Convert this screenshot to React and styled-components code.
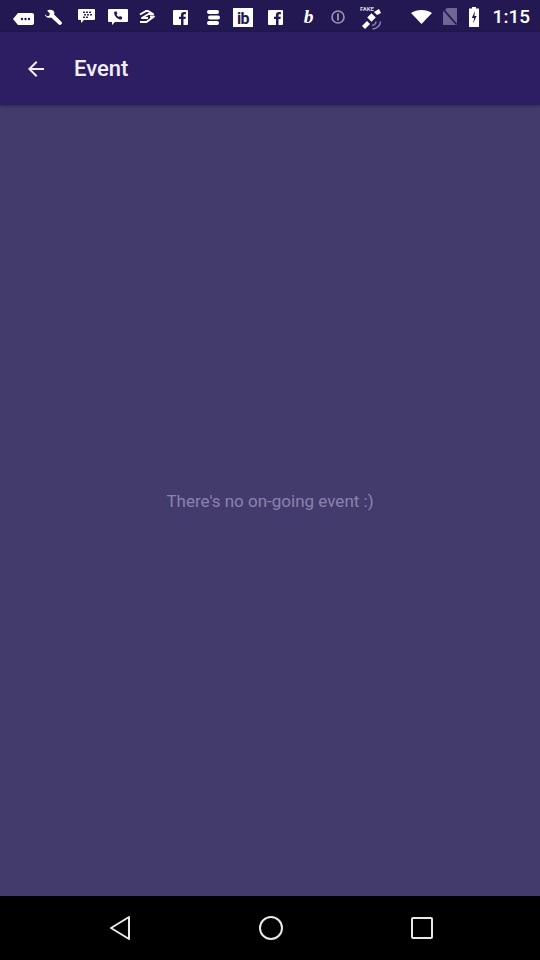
import React from "react";
import styled, { createGlobalStyle } from "styled-components";

const Global = createGlobalStyle`
  html, body { margin: 0; padding: 0; }
  body { font-family: Roboto, "Noto Sans", sans-serif; background: #000; }
`;

const Screen = styled.div`
  width: 540px;
  height: 960px;
  display: flex;
  flex-direction: column;
  overflow: hidden;
`;

const StatusBar = styled.div`
  height: 32px;
  flex: 0 0 32px;
  background: #231852;
  display: flex;
  align-items: center;
  padding: 0 10px 0 13px;
  color: #fff;
  box-sizing: border-box;
`;

const IconSlot = styled.div`
  width: ${(p) => p.w}px;
  flex: 0 0 ${(p) => p.w}px;
  margin-right: ${(p) => p.gap}px;
  margin-top: ${(p) => p.dy || 0}px;
  height: 28px;
  display: flex;
  align-items: center;
  justify-content: center;
  overflow: visible;
`;

const Spacer = styled.div`
  flex: 1;
`;

const Time = styled.span`
  font-size: 19px;
  font-weight: 500;
  color: #fff;
  margin-top: 1px;
`;

const Toolbar = styled.div`
  height: 73px;
  flex: 0 0 73px;
  background: #2d1d62;
  display: flex;
  align-items: center;
  position: relative;
  z-index: 1;
  box-shadow: 0 1px 3px rgba(0, 0, 0, 0.35);
`;

const BackButton = styled.div`
  width: 72px;
  height: 73px;
  display: flex;
  align-items: center;
  justify-content: center;
`;

const Title = styled.div`
  font-size: 22px;
  font-weight: 500;
  color: #f3effa;
  margin-left: 2px;
`;

const Body = styled.div`
  flex: 1;
  background: #443b6d;
  display: flex;
  align-items: center;
  justify-content: center;
`;

const EmptyText = styled.div`
  font-size: 17px;
  color: #8b83ab;
`;

const NavBar = styled.div`
  height: 64px;
  flex: 0 0 64px;
  background: #000;
  display: grid;
  grid-template-columns: repeat(3, 151px);
  align-items: center;
  justify-items: center;
  padding: 0 43px 0 44px;
  box-sizing: border-box;
`;

const W = "#fff";
const BG = "#231852";

const fIcon = (
  <svg width="15" height="15" viewBox="0 0 15 15"><rect width="15" height="15" rx="1" fill={W}/><path d="M10.5 15V9h2l.3-2.3h-2.3V5.3c0-.7.2-1.1 1.1-1.1h1.3V2.2c-.2 0-1-.1-1.9-.1-1.9 0-3.1 1.1-3.1 3.2v1.4H6V9h2v6z" fill={BG}/></svg>
);

const icons = [
  { w: 21, gap: 11, dy: 5, svg: (
    <svg width="21" height="12" viewBox="0 0 21 12"><path d="M5 0h14a2 2 0 0 1 2 2v8a2 2 0 0 1-2 2H5L0 6z" fill={W}/><circle cx="9" cy="6" r="1.2" fill={BG}/><circle cx="12.5" cy="6" r="1.2" fill={BG}/><circle cx="16" cy="6" r="1.2" fill={BG}/></svg>
  )},
  { w: 20, gap: 13, dy: 1, svg: (
    <svg width="20" height="16" viewBox="0 0 24 20"><path fill={W} d="M5.5 1c-1.3 0-2.4.4-3.3 1.1L5.6 5.5 4.8 8.3 2 9.1-1.4 5.7C-.3 9 1.9 11 5 11c.8 0 1.5-.1 2.2-.4l9.6 8.9c.7.7 1.8.7 2.5 0l.9-.9c.7-.7.7-1.8 0-2.5L10.8 7c.3-.7.4-1.4.4-2.2C11.2 2.5 8.6 1 5.5 1z"/></svg>
  )},
  { w: 17, gap: 13, dy: 0, svg: (
    <svg width="17" height="14" viewBox="0 0 17 14"><path d="M1 0h15a1 1 0 0 1 1 1v9a1 1 0 0 1-1 1H6l-3 3v-3H1a1 1 0 0 1-1-1V1a1 1 0 0 1 1-1z" fill={W}/>{[[5,2.5],[8,2.5],[11,2.5],[6,5],[9,5],[12,5],[5,7.5],[8,7.5]].map(([x,y],i)=>(<rect key={i} x={x} y={y} width="2" height="1.5" rx="0.5" fill={BG}/>))}</svg>
  )},
  { w: 20, gap: 10, dy: 1, svg: (
    <svg width="20" height="16" viewBox="0 0 20 16"><path d="M1 0h18a1 1 0 0 1 1 1v11a1 1 0 0 1-1 1H7l-3 3v-3H1a1 1 0 0 1-1-1V1a1 1 0 0 1 1-1z" fill={W}/><path d="M7 2.5h1.6l.9 2.2-1 .9c.5 1.1 1.4 2 2.5 2.5l.9-1 2.2.9V9.6c0 .5-.4.9-.9.9C9.6 10.5 6.1 7 6.1 3.4c0-.5.4-.9.9-.9z" fill={BG}/></svg>
  )},
  { w: 17, gap: 18, dy: 0, svg: (
    <svg width="17" height="13" viewBox="0 0 17 13"><path d="M2 4.5L9 0.5l6 3.5h-4.5L4 8h6" stroke={W} strokeWidth="2" fill="none" strokeLinejoin="round"/><path d="M2 12h6.5L16 6.5h-4" stroke={W} strokeWidth="2" fill="none" strokeLinejoin="round"/></svg>
  )},
  { w: 15, gap: 19, dy: 2, svg: fIcon },
  { w: 13, gap: 13, dy: 2, svg: (
    <svg width="13" height="15" viewBox="0 0 13 15"><rect x="0" y="0" width="12" height="4" rx="2" fill={W}/><rect x="1" y="5.5" width="12" height="4" rx="2" fill={W}/><rect x="0" y="11" width="12" height="4" rx="2" fill={W}/></svg>
  )},
  { w: 20, gap: 15, dy: 2, svg: (
    <svg width="20" height="19" viewBox="0 0 20 19"><rect width="20" height="19" fill={W}/><text x="10" y="15.5" textAnchor="middle" fontFamily="Roboto, sans-serif" fontWeight="700" fontSize="16" letterSpacing="-0.5" fill={BG}>ib</text></svg>
  )},
  { w: 15, gap: 19, dy: 2, svg: fIcon },
  { w: 13, gap: 15, dy: 0, svg: (
    <svg width="14" height="19" viewBox="0 0 14 19"><text x="7" y="16" textAnchor="middle" fontFamily="'Liberation Serif', serif" fontStyle="italic" fontWeight="700" fontSize="21" fill={W}>b</text></svg>
  )},
  { w: 15, gap: 15, dy: 1, svg: (
    <svg width="14" height="14" viewBox="0 0 14 14"><circle cx="7" cy="7" r="6" stroke="#9b95b8" strokeWidth="1.6" fill="none"/><rect x="6.1" y="3.5" width="1.8" height="7" fill="#9b95b8"/></svg>
  )},
  { w: 22, gap: 0, dy: 3, svg: (
    <svg width="22" height="24" viewBox="0 0 22 24"><text x="0" y="5" fontFamily="Roboto, sans-serif" fontWeight="700" fontSize="6" fill="#d8d4e6">FAKE</text><path d="M2 20l5-5 3 3-5 5z" fill={W}/><rect x="8.5" y="8.5" width="6" height="6" transform="rotate(45 11.5 11.5)" fill={W}/><path d="M14 6l5-3 2 4-4 2z" fill={W}/><path d="M12 19.5c2 0 4-2 4-4M12.5 23c4 0 8-3.5 8-7.5" stroke="#8a84ad" strokeWidth="1.5" fill="none"/></svg>
  )},
];

function BackArrow() {
  return (
    <svg width="24" height="24" viewBox="0 0 24 24">
      <path d="M20 11H7.83l5.59-5.59L12 4l-8 8 8 8 1.41-1.41L7.83 13H20v-2z" fill="#f3effa" />
    </svg>
  );
}

export default function App() {
  return (
    <>
      <Global />
      <Screen>
        <StatusBar>
          {icons.map((ic, i) => (
            <IconSlot key={i} w={ic.w} gap={ic.gap} dy={ic.dy}>{ic.svg}</IconSlot>
          ))}
          <Spacer />
          <IconSlot w={21} gap={11} dy={1}>
            <svg width="21" height="14" viewBox="0 0 21 14"><path d="M10.5 14L0 2.9C2.9 1.1 6.6 0 10.5 0S18.1 1.1 21 2.9z" fill={W}/></svg>
          </IconSlot>
          <IconSlot w={14} gap={12} dy={1}>
            <svg width="14" height="17" viewBox="0 0 14 17"><path d="M4 0h10v17H0V4z" fill="#6e6796"/><path d="M0.5 1.5l13 15" stroke={BG} strokeWidth="1.6"/></svg>
          </IconSlot>
          <IconSlot w={10} gap={14} dy={1}>
            <svg width="10" height="20" viewBox="0 0 10 20"><rect x="3" y="0" width="4" height="2" fill={W}/><rect x="0" y="1.5" width="10" height="18.5" fill={W}/><path d="M6 4L2.8 11h2.3l-1 5.5L7.6 9H5.4z" fill={BG}/></svg>
          </IconSlot>
          <Time>1:15</Time>
        </StatusBar>
        <Toolbar>
          <BackButton><BackArrow /></BackButton>
          <Title>Event</Title>
        </Toolbar>
        <Body>
          <EmptyText>There's no on-going event :)</EmptyText>
        </Body>
        <NavBar>
          <svg width="24" height="26" viewBox="0 0 24 26"><path d="M21 2L3 13l18 11z" stroke="#e8e8e8" strokeWidth="2" strokeLinejoin="round" fill="none"/></svg>
          <svg width="26" height="26" viewBox="0 0 26 26"><circle cx="13" cy="13" r="11" stroke="#e8e8e8" strokeWidth="2" fill="none"/></svg>
          <svg width="24" height="24" viewBox="0 0 24 24"><rect x="2" y="2" width="20" height="20" rx="1" stroke="#e8e8e8" strokeWidth="2" fill="none"/></svg>
        </NavBar>
      </Screen>
    </>
  );
}
